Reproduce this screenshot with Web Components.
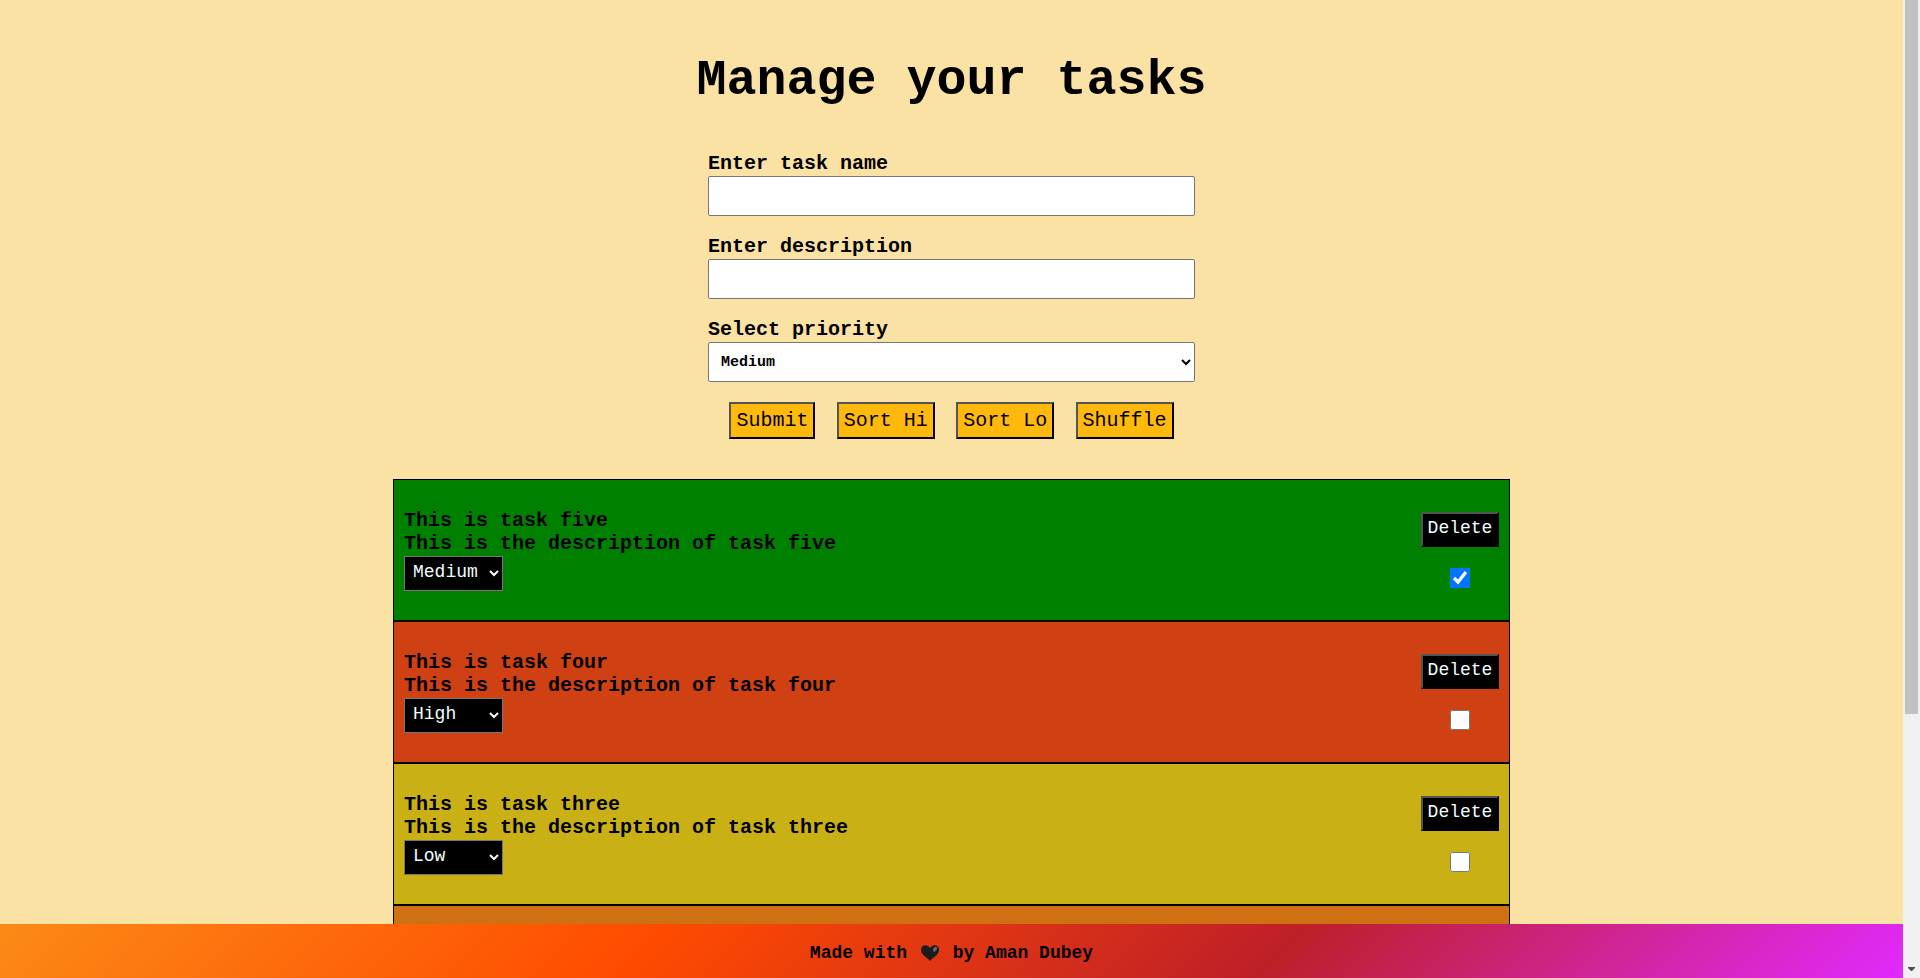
<!DOCTYPE html>
<html lang="en">
<head>
<meta charset="utf-8">
<title>Manage your tasks</title>
<style>
html, body { height: 100%; margin: 0; }
body { overflow: hidden; background: #fae1a4; color: #000; font-family: "Courier New", "Liberation Mono", monospace; }
</style>
</head>
<body>
<task-app></task-app>
<script>
const define = (name, html, setup) => {
  const template = document.createElement('template');
  template.innerHTML = html;
  customElements.define(name, class extends HTMLElement {
    connectedCallback() {
      if (this.shadowRoot) return;
      const root = this.attachShadow({ mode: 'open' });
      root.append(template.content.cloneNode(true));
      if (setup) setup(this, root);
    }
  });
};

define('form-field', `
<style>
:host { display: block; margin-bottom: 20px; }
label { display: block; padding-bottom: 2px; font-size: 20px; line-height: 21px; font-weight: bold; }
input, select { display: block; box-sizing: border-box; width: 100%; height: 40px; padding: 0 8px; border: 1px solid #767676; border-radius: 2px; background: #fff; color: #000; font: bold 15px "Courier New", "Liberation Mono", monospace; }
</style>
<label for="control"></label>`, (host, root) => {
  root.querySelector('label').textContent = host.getAttribute('label');
  const isSelect = host.getAttribute('type') === 'select';
  const control = document.createElement(isSelect ? 'select' : 'input');
  control.id = 'control';
  if (isSelect) ['Medium', 'High', 'Low'].forEach(t => control.add(new Option(t)));
  root.append(control);
});

define('form-button', `
<style>
:host { display: block; }
button { display: block; height: 37px; padding: 0 5px 1px; border: 2px outset #000; background: #ffb90d; color: #000; font: 20px "Courier New", "Liberation Mono", monospace; }
</style>
<button type="button"><slot></slot></button>`);

define('task-form', `
<style>
:host { display: block; width: 487px; max-width: 100%; margin: 0 auto; }
.actions { display: flex; justify-content: space-evenly; }
</style>
<form>
<form-field label="Enter task name"></form-field>
<form-field label="Enter description"></form-field>
<form-field label="Select priority" type="select"></form-field>
<div class="actions">
<form-button>Submit</form-button><form-button>Sort Hi</form-button><form-button>Sort Lo</form-button><form-button>Shuffle</form-button>
</div>
</form>`);

define('task-card', `
<style>
:host { display: flex; justify-content: space-between; box-sizing: border-box; height: 142px; padding: 29px 10px; border: 1px solid #000; background: var(--tone); }
.text { font-size: 20px; line-height: 23px; font-weight: bold; }
select, button { display: block; height: 35px; background: #000; color: azure; font: 18px "Courier New", "Liberation Mono", monospace; }
select { width: 99px; margin-top: 1px; padding: 0 4px 3px; border: 1px solid #767676; border-radius: 0; }
button { width: 78px; padding: 0 4px 3px; border: 2px outset #000; }
.side { display: flex; flex-direction: column; align-items: center; gap: 21px; padding-top: 3px; }
input { width: 20px; height: 20px; margin: 0; }
</style>
<div>
<div class="text"><slot name="title"></slot></div>
<div class="text"><slot></slot></div>
<select aria-label="Priority"><option>Medium</option><option>High</option><option>Low</option></select>
</div>
<div class="side"><button type="button">Delete</button><input type="checkbox" aria-label="Done"></div>`, (host, root) => {
  root.querySelector('select').value = host.getAttribute('priority');
  root.querySelector('input').checked = host.hasAttribute('done');
});

define('app-footer', `
<style>
:host { display: block; box-sizing: border-box; height: 54px; background: linear-gradient(135deg, #fc8a17 0%, #ff4b00 34%, #be1f28 67%, #e12aff 100%); text-align: center; font-size: 18px; line-height: 58px; font-weight: bold; }
svg { width: 20px; height: 18px; margin: 0 2px; vertical-align: -4px; }
</style>
<span>Made with </span><svg viewBox="0 0 20 18" role="img" aria-label="black heart"><path d="M10 17C8 14 1 11 1 6C1 .5 7-.5 10 4C13-.5 19 .5 19 6C19 11 12 14 10 17Z" fill="#1b1c1d"/><path d="M13 6.500C13 3.500 15.500 2.200 16.800 3.200C17.800 4.500 16 7.500 14 7.800C13.300 7.800 13 7.200 13 6.500Z" fill="#666"/></svg><span> by Aman Dubey</span>`);

define('page-scrollbar', `
<style>
:host { display: flex; flex-direction: column; align-items: center; justify-content: space-between; background: #f0f0f0; }
.thumb { width: 13px; height: 73%; background: #c1c1c1; }
svg { width: 7px; height: 4px; margin-bottom: 7px; }
</style>
<div class="thumb"></div><svg viewBox="0 0 7 4"><path d="M0 0H7V1L4 4H3L0 1Z" fill="#505050"/></svg>`);

define('task-app', `
<style>
:host { display: grid; grid-template-columns: 1fr 17px; height: 100vh; }
.page { display: grid; grid-template-rows: minmax(0, 1fr) auto; min-width: 0; height: 100vh; }
main { overflow: hidden; }
h1 { margin: 52px 0 43px; font-size: 50px; line-height: 58px; text-align: center; }
.list { width: 1117px; max-width: 100%; margin: 40px auto 0; }
.next { box-sizing: border-box; height: 142px; border: 1px solid #000; background: #cf7013; }
</style>
<div class="page">
<main>
<h1>Manage your tasks</h1>
<task-form></task-form>
<div class="list">
<task-card priority="Medium" done style="--tone:#008000"><span slot="title">This is task five</span>This is the description of task five</task-card>
<task-card priority="High" style="--tone:#cf4013"><span slot="title">This is task four</span>This is the description of task four</task-card>
<task-card priority="Low" style="--tone:#c9b014"><span slot="title">This is task three</span>This is the description of task three</task-card>
<div class="next"></div>
</div>
</main>
<app-footer></app-footer>
</div>
<page-scrollbar></page-scrollbar>`);
</script>
</body>
</html>
